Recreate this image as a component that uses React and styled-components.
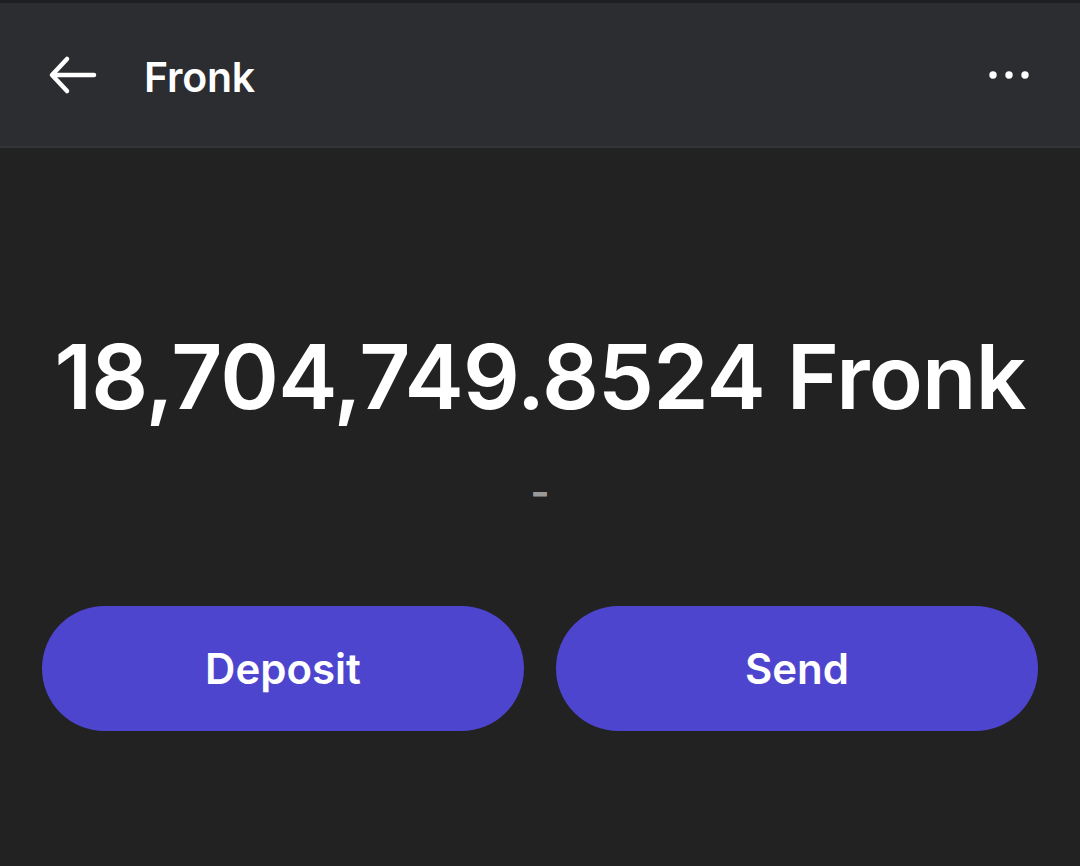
import React from "react";
import styled, { createGlobalStyle } from "styled-components";

const Global = createGlobalStyle`
  html, body { margin: 0; padding: 0; background: #222222; }
  body { font-family: Inter, "Noto Sans", sans-serif; -webkit-font-smoothing: antialiased; }
  * { box-sizing: border-box; }
`;

const Screen = styled.div`
  width: 1080px;
  height: 866px;
  background: #222222;
  display: flex;
  flex-direction: column;
`;

const Header = styled.header`
  height: 148px;
  background: #2c2d31;
  border-top: 3px solid #1d1e21;
  border-bottom: 2px solid #333438;
  display: flex;
  align-items: center;
  padding: 0 49px 0 48px;
`;

const IconButton = styled.button`
  background: none;
  border: none;
  padding: 0;
  display: flex;
  align-items: center;
  justify-content: center;
  color: #ffffff;
  cursor: pointer;
`;

const Title = styled.h1`
  margin: 4px 0 0 46px;
  font-size: 41px;
  font-weight: 600;
  color: #ffffff;
  flex: 1;
  letter-spacing: -0.2px;
`;

const Body = styled.main`
  flex: 1;
  display: flex;
  flex-direction: column;
  align-items: center;
  padding: 184px 42px 0;
`;

const Amount = styled.div`
  font-size: 89px;
  font-weight: 600;
  line-height: 1;
  color: #ffffff;
  letter-spacing: -0.8px;
  white-space: nowrap;
`;

const Sub = styled.div`
  margin-top: 50px;
  font-size: 42px;
  line-height: 1;
  color: #9a9a9a;
  font-weight: 600;
`;

const Actions = styled.div`
  align-self: stretch;
  margin-top: 93px;
  display: grid;
  grid-template-columns: 1fr 1fr;
  gap: 32px;
`;

const Action = styled.button`
  height: 125px;
  border: none;
  border-radius: 999px;
  background: #4e45cf;
  color: #ffffff;
  font-family: Inter, "Noto Sans", sans-serif;
  font-size: 42px;
  font-weight: 600;
  cursor: pointer;
`;

const BackArrow = () => (
  <svg width="50" height="40" viewBox="0 0 50 40" fill="none" stroke="currentColor" strokeWidth="4.5" strokeLinecap="round" strokeLinejoin="round">
    <path d="M46 20H5" />
    <path d="M19 4L4 20l15 16" />
  </svg>
);

const Dots = () => (
  <svg width="44" height="12" viewBox="0 0 44 12" fill="currentColor">
    <circle cx="6" cy="6" r="3.7" />
    <circle cx="22" cy="6" r="3.7" />
    <circle cx="38" cy="6" r="3.7" />
  </svg>
);

export default function App() {
  return (
    <>
      <Global />
      <Screen>
        <Header>
          <IconButton aria-label="Back"><BackArrow /></IconButton>
          <Title>Fronk</Title>
          <IconButton aria-label="More"><Dots /></IconButton>
        </Header>
        <Body>
          <Amount>18,704,749.8524 Fronk</Amount>
          <Sub>-</Sub>
          <Actions>
            <Action>Deposit</Action>
            <Action>Send</Action>
          </Actions>
        </Body>
      </Screen>
    </>
  );
}
